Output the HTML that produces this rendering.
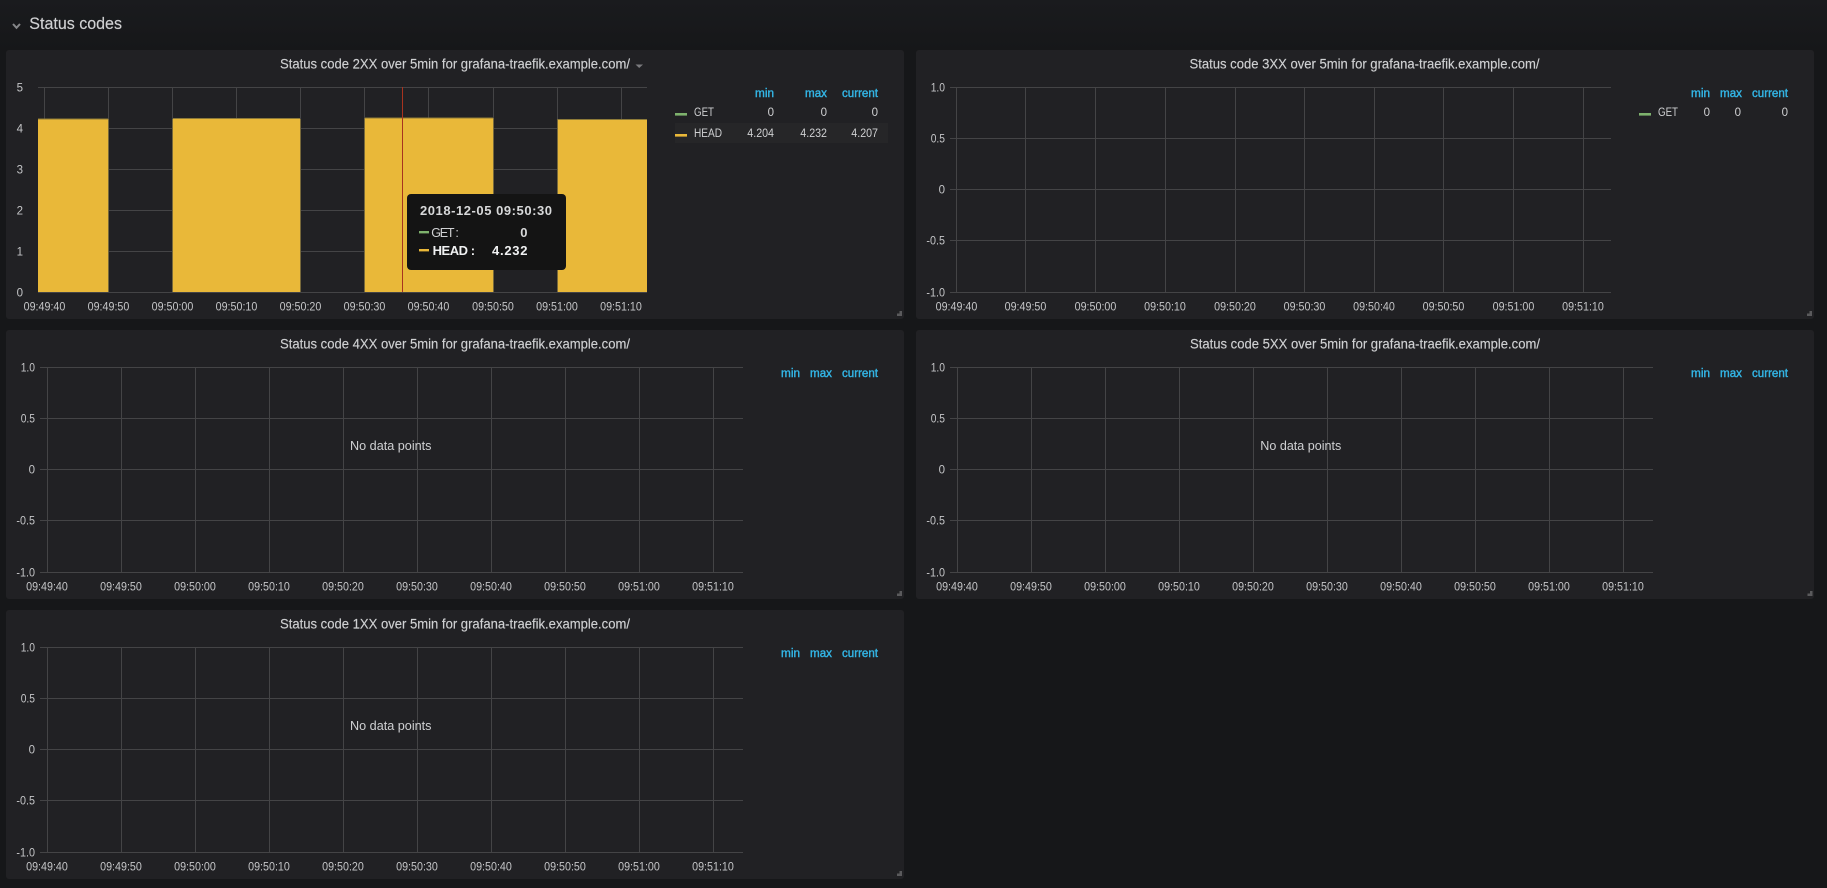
<!DOCTYPE html>
<html lang="en"><head><meta charset="utf-8"><title>Status codes</title>
<style>
html,body{margin:0;padding:0;width:1827px;height:888px;overflow:hidden;background:#161719}
svg{display:block;position:absolute;left:0;top:0}
text{font-family:"Liberation Sans",sans-serif}
.p{fill:#212124}
.g{stroke:#444446;stroke-width:1;fill:none}
.t{font-size:11.5px;fill:#c4c5c7;text-anchor:middle}
.y{font-size:11.5px;fill:#c4c5c7;text-anchor:end}
.h{font-size:14px;fill:#cfd0d2;stroke:#cfd0d2;stroke-width:.15px}
.b{font-size:11.5px;fill:#33b5e5;stroke:#33b5e5;stroke-width:.4px;text-anchor:end}
.l{font-size:11.5px;fill:#d0d1d3}
.v{font-size:11.5px;fill:#d0d1d3;text-anchor:end}
.n{font-size:13px;fill:#cfd0d2}
.r{fill:#5a5a5c}
</style></head><body>
<svg width="1827" height="888" viewBox="0 0 1827 888" xmlns="http://www.w3.org/2000/svg">
<defs><linearGradient id="bg" x1="0" y1="0" x2="0" y2="1"><stop offset="0" stop-color="#1a1b1e"/><stop offset="1" stop-color="#161719"/></linearGradient></defs>
<rect width="1827" height="888" fill="#161719"/>
<rect width="1827" height="50" fill="url(#bg)"/>

<!-- Row header -->
<path d="M13 24 L16.5 27.8 L20 24" fill="none" stroke="#86878a" stroke-width="2"/>
<text x="29.3" y="29" font-size="16.5" fill="#d0d1d3" stroke="#d0d1d3" stroke-width=".15" textLength="92.7" lengthAdjust="spacingAndGlyphs">Status codes</text>

<!-- Panels -->
<rect class="p" x="6" y="50" width="898" height="269" rx="3"/>
<rect class="p" x="916" y="50" width="898" height="269" rx="3"/>
<rect class="p" x="6" y="330" width="898" height="269" rx="3"/>
<rect class="p" x="916" y="330" width="898" height="269" rx="3"/>
<rect class="p" x="6" y="610" width="898" height="269" rx="3"/>

<!-- Panel 2XX -->
<text class="h" x="280" y="68.5" textLength="350" lengthAdjust="spacingAndGlyphs">Status code 2XX over 5min for grafana-traefik.example.com/</text>
<polygon points="635.5,64.5 643,64.5 639.2,68" fill="#7b7b7e"/>
<path class="g" d="M38 87.5H647M38 128.5H647M38 169.5H647M38 210.5H647M38 251.5H647M44.5 87V292M108.5 87V292M172.5 87V292M236.5 87V292M300.5 87V292M364.5 87V292M428.5 87V292M493.5 87V292M557.5 87V292M621.5 87V292"/>
<rect x="38" y="119.5" width="70" height="172.5" fill="#e9b839"/>
<rect x="173" y="119" width="127" height="173" fill="#e9b839"/>
<rect x="365" y="118.5" width="128" height="173.5" fill="#e9b839"/>
<rect x="558" y="120" width="89" height="172" fill="#e9b839"/>
<path d="M38 119H108M173 118.5H300M365 118H493M558 119.5H647" stroke="#8d7a38" stroke-width="1" fill="none"/>
<path d="M108.5 119V292M172.5 119V292M300.5 119V292M364.5 118V292M493.5 118V292M557.5 119V292" stroke="#77683a" stroke-width="1" fill="none"/>
<path class="g" d="M38 292.5H647"/>
<path d="M402.5 87V292" stroke="#a8331f" stroke-width="1"/>
<text class="y" x="23" y="91.5" textLength="6">5</text>
<text class="y" x="23" y="132.5" textLength="6">4</text>
<text class="y" x="23" y="173.5" textLength="6">3</text>
<text class="y" x="23" y="214.5" textLength="6">2</text>
<text class="y" x="23" y="255.5" textLength="6">1</text>
<text class="y" x="23" y="296.5" textLength="6">0</text>
<text class="t" x="44.5" y="310.3" textLength="41.7" lengthAdjust="spacingAndGlyphs">09:49:40</text>
<text class="t" x="108.5" y="310.3" textLength="41.7" lengthAdjust="spacingAndGlyphs">09:49:50</text>
<text class="t" x="172.5" y="310.3" textLength="41.7" lengthAdjust="spacingAndGlyphs">09:50:00</text>
<text class="t" x="236.5" y="310.3" textLength="41.7" lengthAdjust="spacingAndGlyphs">09:50:10</text>
<text class="t" x="300.5" y="310.3" textLength="41.7" lengthAdjust="spacingAndGlyphs">09:50:20</text>
<text class="t" x="364.5" y="310.3" textLength="41.7" lengthAdjust="spacingAndGlyphs">09:50:30</text>
<text class="t" x="428.5" y="310.3" textLength="41.7" lengthAdjust="spacingAndGlyphs">09:50:40</text>
<text class="t" x="493" y="310.3" textLength="41.7" lengthAdjust="spacingAndGlyphs">09:50:50</text>
<text class="t" x="557" y="310.3" textLength="41.7" lengthAdjust="spacingAndGlyphs">09:51:00</text>
<text class="t" x="621" y="310.3" textLength="41.7" lengthAdjust="spacingAndGlyphs">09:51:10</text>
<text class="b" x="774" y="97" textLength="19" lengthAdjust="spacingAndGlyphs">min</text>
<text class="b" x="827" y="97" textLength="22" lengthAdjust="spacingAndGlyphs">max</text>
<text class="b" x="878" y="97" textLength="36" lengthAdjust="spacingAndGlyphs">current</text>
<rect x="675" y="123" width="213" height="20" fill="#262628"/>
<rect x="675" y="113" width="12" height="2.6" fill="#7eb26d"/>
<text class="l" x="694" y="116" textLength="20" lengthAdjust="spacingAndGlyphs">GET</text>
<text class="v" x="774" y="116">0</text><text class="v" x="827" y="116">0</text><text class="v" x="878" y="116">0</text>
<rect x="675" y="134" width="12" height="2.6" fill="#eab839"/>
<text class="l" x="694" y="137" textLength="28" lengthAdjust="spacingAndGlyphs">HEAD</text>
<text class="v" x="774" y="137" textLength="26.7" lengthAdjust="spacingAndGlyphs">4.204</text>
<text class="v" x="827" y="137" textLength="26.7" lengthAdjust="spacingAndGlyphs">4.232</text>
<text class="v" x="878" y="137" textLength="26.7" lengthAdjust="spacingAndGlyphs">4.207</text>
<path class="r" d="M902 311V316H897V313.5H899.5V311Z"/>

<!-- Tooltip -->
<rect x="407" y="194" width="159" height="76" rx="4" fill="#141414"/>
<text x="420" y="215" font-size="13" font-weight="700" fill="#d8d9da" textLength="132">2018-12-05 09:50:30</text>
<rect x="419" y="231" width="10" height="2.4" fill="#7eb26d"/>
<text x="431.3" y="237" font-size="12.5" fill="#d0d1d3" textLength="27.5">GET :</text>
<text x="527.5" y="237" font-size="13" font-weight="700" fill="#d8d9da" text-anchor="end">0</text>
<rect x="419" y="249" width="10" height="2.4" fill="#eab839"/>
<text x="432.6" y="255" font-size="13" font-weight="700" fill="#f0f1f2" textLength="42.5">HEAD :</text>
<text x="527.5" y="255" font-size="13" font-weight="700" fill="#f0f1f2" text-anchor="end" textLength="35.5">4.232</text>

<!-- Panel 3XX -->
<text class="h" x="1189.5" y="68.5" textLength="350" lengthAdjust="spacingAndGlyphs">Status code 3XX over 5min for grafana-traefik.example.com/</text>
<path class="g" d="M950 87.5H1611M950 138.5H1611M950 189.5H1611M950 240.5H1611M950 292.5H1611M956.5 87V292M1025.5 87V292M1095.5 87V292M1165.5 87V292M1235.5 87V292M1304.5 87V292M1374.5 87V292M1443.5 87V292M1513.5 87V292M1583.5 87V292"/>
<text class="y" x="945" y="91.5" textLength="14.3" lengthAdjust="spacingAndGlyphs">1.0</text>
<text class="y" x="945" y="142.5" textLength="14.3" lengthAdjust="spacingAndGlyphs">0.5</text>
<text class="y" x="945" y="193.5">0</text>
<text class="y" x="945" y="244.5" textLength="18.6" lengthAdjust="spacingAndGlyphs">-0.5</text>
<text class="y" x="945" y="296.5" textLength="18.6" lengthAdjust="spacingAndGlyphs">-1.0</text>
<text class="t" x="956.5" y="310.3" textLength="41.7" lengthAdjust="spacingAndGlyphs">09:49:40</text>
<text class="t" x="1025.5" y="310.3" textLength="41.7" lengthAdjust="spacingAndGlyphs">09:49:50</text>
<text class="t" x="1095.5" y="310.3" textLength="41.7" lengthAdjust="spacingAndGlyphs">09:50:00</text>
<text class="t" x="1165" y="310.3" textLength="41.7" lengthAdjust="spacingAndGlyphs">09:50:10</text>
<text class="t" x="1235" y="310.3" textLength="41.7" lengthAdjust="spacingAndGlyphs">09:50:20</text>
<text class="t" x="1304.5" y="310.3" textLength="41.7" lengthAdjust="spacingAndGlyphs">09:50:30</text>
<text class="t" x="1374" y="310.3" textLength="41.7" lengthAdjust="spacingAndGlyphs">09:50:40</text>
<text class="t" x="1443.5" y="310.3" textLength="41.7" lengthAdjust="spacingAndGlyphs">09:50:50</text>
<text class="t" x="1513.5" y="310.3" textLength="41.7" lengthAdjust="spacingAndGlyphs">09:51:00</text>
<text class="t" x="1583" y="310.3" textLength="41.7" lengthAdjust="spacingAndGlyphs">09:51:10</text>
<text class="b" x="1710" y="97" textLength="19" lengthAdjust="spacingAndGlyphs">min</text>
<text class="b" x="1742" y="97" textLength="22" lengthAdjust="spacingAndGlyphs">max</text>
<text class="b" x="1788" y="97" textLength="36" lengthAdjust="spacingAndGlyphs">current</text>
<rect x="1639" y="113" width="12" height="2.6" fill="#7eb26d"/>
<text class="l" x="1658" y="116" textLength="20" lengthAdjust="spacingAndGlyphs">GET</text>
<text class="v" x="1710" y="116">0</text><text class="v" x="1741" y="116">0</text><text class="v" x="1788" y="116">0</text>
<path class="r" d="M1812 311V316H1807V313.5H1809.5V311Z"/>

<!-- Panel 4XX -->
<text class="h" x="280" y="348.5" textLength="350" lengthAdjust="spacingAndGlyphs">Status code 4XX over 5min for grafana-traefik.example.com/</text>
<path class="g" d="M40 367.5H743M40 418.5H743M40 469.5H743M40 520.5H743M40 572.5H743M47.5 367V572M121.5 367V572M195.5 367V572M269.5 367V572M343.5 367V572M417.5 367V572M491.5 367V572M565.5 367V572M639.5 367V572M713.5 367V572"/>
<text class="y" x="35" y="371.5" textLength="14.3" lengthAdjust="spacingAndGlyphs">1.0</text>
<text class="y" x="35" y="422.5" textLength="14.3" lengthAdjust="spacingAndGlyphs">0.5</text>
<text class="y" x="35" y="473.5">0</text>
<text class="y" x="35" y="524.5" textLength="18.6" lengthAdjust="spacingAndGlyphs">-0.5</text>
<text class="y" x="35" y="576.5" textLength="18.6" lengthAdjust="spacingAndGlyphs">-1.0</text>
<text class="t" x="47" y="590.3" textLength="41.7" lengthAdjust="spacingAndGlyphs">09:49:40</text>
<text class="t" x="121" y="590.3" textLength="41.7" lengthAdjust="spacingAndGlyphs">09:49:50</text>
<text class="t" x="195" y="590.3" textLength="41.7" lengthAdjust="spacingAndGlyphs">09:50:00</text>
<text class="t" x="269" y="590.3" textLength="41.7" lengthAdjust="spacingAndGlyphs">09:50:10</text>
<text class="t" x="343" y="590.3" textLength="41.7" lengthAdjust="spacingAndGlyphs">09:50:20</text>
<text class="t" x="417" y="590.3" textLength="41.7" lengthAdjust="spacingAndGlyphs">09:50:30</text>
<text class="t" x="491" y="590.3" textLength="41.7" lengthAdjust="spacingAndGlyphs">09:50:40</text>
<text class="t" x="565" y="590.3" textLength="41.7" lengthAdjust="spacingAndGlyphs">09:50:50</text>
<text class="t" x="639" y="590.3" textLength="41.7" lengthAdjust="spacingAndGlyphs">09:51:00</text>
<text class="t" x="713" y="590.3" textLength="41.7" lengthAdjust="spacingAndGlyphs">09:51:10</text>
<text class="n" x="350" y="450" textLength="81.5" lengthAdjust="spacingAndGlyphs">No data points</text>
<text class="b" x="800" y="377" textLength="19" lengthAdjust="spacingAndGlyphs">min</text>
<text class="b" x="832" y="377" textLength="22" lengthAdjust="spacingAndGlyphs">max</text>
<text class="b" x="878" y="377" textLength="36" lengthAdjust="spacingAndGlyphs">current</text>
<path class="r" d="M902 591V596H897V593.5H899.5V591Z"/>

<!-- Panel 5XX -->
<text class="h" x="1190" y="348.5" textLength="350" lengthAdjust="spacingAndGlyphs">Status code 5XX over 5min for grafana-traefik.example.com/</text>
<path class="g" d="M950 367.5H1653M950 418.5H1653M950 469.5H1653M950 520.5H1653M950 572.5H1653M957.5 367V572M1031.5 367V572M1105.5 367V572M1179.5 367V572M1253.5 367V572M1327.5 367V572M1401.5 367V572M1475.5 367V572M1549.5 367V572M1623.5 367V572"/>
<text class="y" x="945" y="371.5" textLength="14.3" lengthAdjust="spacingAndGlyphs">1.0</text>
<text class="y" x="945" y="422.5" textLength="14.3" lengthAdjust="spacingAndGlyphs">0.5</text>
<text class="y" x="945" y="473.5">0</text>
<text class="y" x="945" y="524.5" textLength="18.6" lengthAdjust="spacingAndGlyphs">-0.5</text>
<text class="y" x="945" y="576.5" textLength="18.6" lengthAdjust="spacingAndGlyphs">-1.0</text>
<text class="t" x="957" y="590.3" textLength="41.7" lengthAdjust="spacingAndGlyphs">09:49:40</text>
<text class="t" x="1031" y="590.3" textLength="41.7" lengthAdjust="spacingAndGlyphs">09:49:50</text>
<text class="t" x="1105" y="590.3" textLength="41.7" lengthAdjust="spacingAndGlyphs">09:50:00</text>
<text class="t" x="1179" y="590.3" textLength="41.7" lengthAdjust="spacingAndGlyphs">09:50:10</text>
<text class="t" x="1253" y="590.3" textLength="41.7" lengthAdjust="spacingAndGlyphs">09:50:20</text>
<text class="t" x="1327" y="590.3" textLength="41.7" lengthAdjust="spacingAndGlyphs">09:50:30</text>
<text class="t" x="1401" y="590.3" textLength="41.7" lengthAdjust="spacingAndGlyphs">09:50:40</text>
<text class="t" x="1475" y="590.3" textLength="41.7" lengthAdjust="spacingAndGlyphs">09:50:50</text>
<text class="t" x="1549" y="590.3" textLength="41.7" lengthAdjust="spacingAndGlyphs">09:51:00</text>
<text class="t" x="1623" y="590.3" textLength="41.7" lengthAdjust="spacingAndGlyphs">09:51:10</text>
<text class="n" x="1260.3" y="450" textLength="81" lengthAdjust="spacingAndGlyphs">No data points</text>
<text class="b" x="1710" y="377" textLength="19" lengthAdjust="spacingAndGlyphs">min</text>
<text class="b" x="1742" y="377" textLength="22" lengthAdjust="spacingAndGlyphs">max</text>
<text class="b" x="1788" y="377" textLength="36" lengthAdjust="spacingAndGlyphs">current</text>
<path class="r" d="M1812.5 591V596H1807.5V593.5H1810V591Z"/>

<!-- Panel 1XX -->
<text class="h" x="280" y="628.5" textLength="350" lengthAdjust="spacingAndGlyphs">Status code 1XX over 5min for grafana-traefik.example.com/</text>
<path class="g" d="M40 647.5H743M40 698.5H743M40 749.5H743M40 800.5H743M40 852.5H743M47.5 647V852M121.5 647V852M195.5 647V852M269.5 647V852M343.5 647V852M417.5 647V852M491.5 647V852M565.5 647V852M639.5 647V852M713.5 647V852"/>
<text class="y" x="35" y="651.5" textLength="14.3" lengthAdjust="spacingAndGlyphs">1.0</text>
<text class="y" x="35" y="702.5" textLength="14.3" lengthAdjust="spacingAndGlyphs">0.5</text>
<text class="y" x="35" y="753.5">0</text>
<text class="y" x="35" y="804.5" textLength="18.6" lengthAdjust="spacingAndGlyphs">-0.5</text>
<text class="y" x="35" y="856.5" textLength="18.6" lengthAdjust="spacingAndGlyphs">-1.0</text>
<text class="t" x="47" y="870.3" textLength="41.7" lengthAdjust="spacingAndGlyphs">09:49:40</text>
<text class="t" x="121" y="870.3" textLength="41.7" lengthAdjust="spacingAndGlyphs">09:49:50</text>
<text class="t" x="195" y="870.3" textLength="41.7" lengthAdjust="spacingAndGlyphs">09:50:00</text>
<text class="t" x="269" y="870.3" textLength="41.7" lengthAdjust="spacingAndGlyphs">09:50:10</text>
<text class="t" x="343" y="870.3" textLength="41.7" lengthAdjust="spacingAndGlyphs">09:50:20</text>
<text class="t" x="417" y="870.3" textLength="41.7" lengthAdjust="spacingAndGlyphs">09:50:30</text>
<text class="t" x="491" y="870.3" textLength="41.7" lengthAdjust="spacingAndGlyphs">09:50:40</text>
<text class="t" x="565" y="870.3" textLength="41.7" lengthAdjust="spacingAndGlyphs">09:50:50</text>
<text class="t" x="639" y="870.3" textLength="41.7" lengthAdjust="spacingAndGlyphs">09:51:00</text>
<text class="t" x="713" y="870.3" textLength="41.7" lengthAdjust="spacingAndGlyphs">09:51:10</text>
<text class="n" x="350" y="730" textLength="81.5" lengthAdjust="spacingAndGlyphs">No data points</text>
<text class="b" x="800" y="657" textLength="19" lengthAdjust="spacingAndGlyphs">min</text>
<text class="b" x="832" y="657" textLength="22" lengthAdjust="spacingAndGlyphs">max</text>
<text class="b" x="878" y="657" textLength="36" lengthAdjust="spacingAndGlyphs">current</text>
<path class="r" d="M902 871V876H897V873.5H899.5V871Z"/>
</svg>
</body></html>
